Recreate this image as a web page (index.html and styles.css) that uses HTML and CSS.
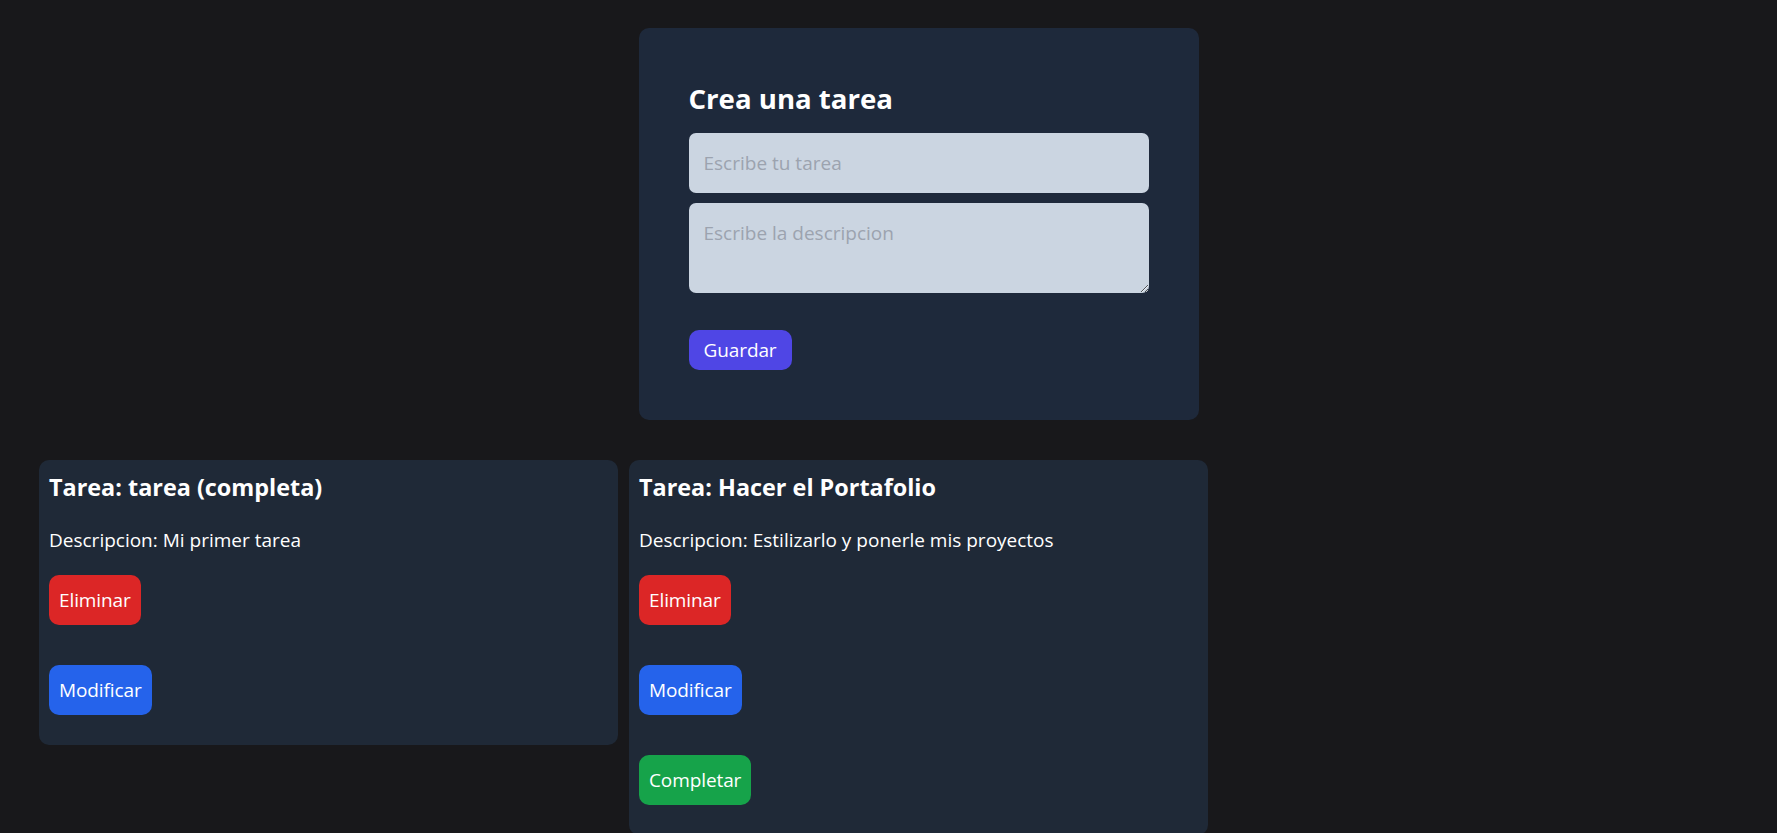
FILE: index.html
```html
<!DOCTYPE html>
<html lang="es">
<head>
<meta charset="utf-8">
<title>Tareas</title>
<link rel="stylesheet" href="styles.css">
</head>
<body>
<main class="page">
  <section class="form-card">
    <h1 class="form-title">Crea una tarea</h1>
    <input class="field" type="text" placeholder="Escribe tu tarea">
    <textarea class="field area" placeholder="Escribe la descripcion"></textarea>
    <button class="btn btn-save">Guardar</button>
  </section>
  <section class="tasks">
    <article class="task">
      <h2 class="task-title">Tarea: tarea (completa)</h2>
      <p class="task-desc">Descripcion: Mi primer tarea</p>
      <button class="btn btn-task btn-delete">Eliminar</button>
      <button class="btn btn-task btn-edit">Modificar</button>
    </article>
    <article class="task">
      <h2 class="task-title">Tarea: Hacer el Portafolio</h2>
      <p class="task-desc">Descripcion: Estilizarlo y ponerle mis proyectos</p>
      <button class="btn btn-task btn-delete">Eliminar</button>
      <button class="btn btn-task btn-edit">Modificar</button>
      <button class="btn btn-task btn-done">Completar</button>
    </article>
  </section>
</main>
</body>
</html>
```
FILE: styles.css
```css
html {
  overflow-x: hidden;
}

body {
  margin: 0;
  background: #18181b;
  color: #ffffff;
  font-family: "Open Sans", "Noto Sans", sans-serif;
}

.page {
  width: 1759px;
  margin-left: 39px;
  padding-top: 28px;
}

.form-card {
  box-sizing: border-box;
  width: 560px;
  margin: 0 auto;
  padding: 50px;
  background: #1e293b;
  border-radius: 10px;
}

.form-title {
  margin: 0 0 15px;
  font-size: 27.6px;
  line-height: 40px;
  font-weight: 700;
}

.field {
  display: block;
  box-sizing: border-box;
  width: 100%;
  margin: 0 0 10px;
  padding: 15px;
  border: 0;
  border-radius: 7px;
  background: #cbd5e1;
  color: #111827;
  font-family: inherit;
  font-size: 19px;
  line-height: 30px;
  outline: none;
}

.field::placeholder {
  color: #9ca3af;
}

.area {
  height: 90px;
  margin-bottom: 37px;
}

.btn {
  display: block;
  border: 0;
  border-radius: 10px;
  color: #ffffff;
  font-family: inherit;
  font-size: 19px;
  line-height: 30px;
  letter-spacing: -0.1px;
  padding: 5px 15px;
  cursor: pointer;
}

.btn-save {
  background: #4f46e5;
}

.tasks {
  display: grid;
  grid-template-columns: repeat(3, 579px);
  gap: 11px;
  margin-top: 40px;
  align-items: start;
}

.task {
  display: flex;
  flex-direction: column;
  align-items: flex-start;
  padding: 10px;
  background: #1f2937;
  border-radius: 10px;
}

.task-title {
  margin: 0 0 20px;
  font-size: 23.4px;
  line-height: 35px;
  font-weight: 700;
}

.task-desc {
  margin: 0;
  font-size: 19px;
  line-height: 30px;
}

.btn-task {
  padding: 10px;
  margin: 20px 0;
}

.btn-delete {
  background: #dc2626;
}

.btn-edit {
  background: #2563eb;
}

.btn-done {
  background: #16a34a;
}
```
